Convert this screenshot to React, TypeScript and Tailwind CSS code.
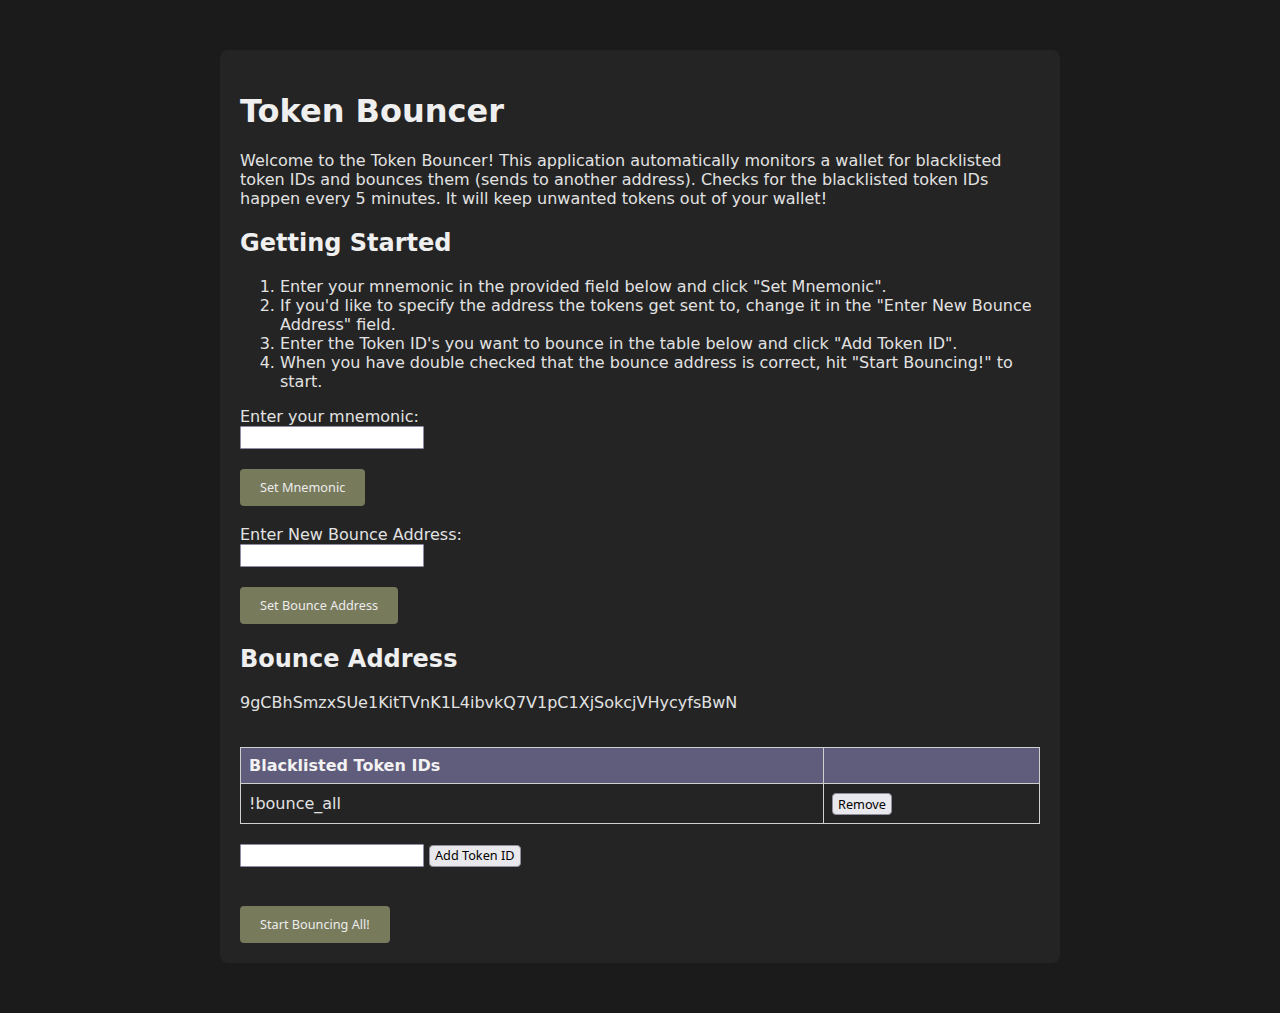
import { useState } from "react"

const btnFont = { fontFamily: '"Noto Sans", "Open Sans", sans-serif' }

function OliveButton({ children }: { children: React.ReactNode }) {
  return (
    <button
      className="self-start h-[37px] px-5 rounded-[4px] bg-[#787a5c] text-[12.7px] text-[#ececec] hover:bg-[#6c6e52]"
      style={btnFont}
    >
      {children}
    </button>
  )
}

function TextInput() {
  return (
    <input
      type="text"
      className="w-[184px] h-[23px] bg-white text-black text-[13px] px-1 border border-[#8f8ca6] rounded-[1px] outline-none"
    />
  )
}

function SmallButton({ children }: { children: React.ReactNode }) {
  return (
    <button
      className="h-[22px] px-[5px] rounded-[4px] bg-[#e9e9ed] border border-[#8f8f9d] text-[12.7px] text-black"
      style={btnFont}
    >
      {children}
    </button>
  )
}

export default function App() {
  const [tokens] = useState(["!bounce_all"])

  return (
    <div
      className="min-h-[1013px] bg-[#1b1b1b] text-[#e2e2e2] pt-[50px] pb-[50px]"
      style={{ fontFamily: '"DejaVu Sans", sans-serif' }}
    >
      <div className="w-[840px] mx-auto bg-[#242424] rounded-[8px] p-5 flex flex-col">
        <h1 className="mt-[23px] text-[32px] font-bold leading-[37px] text-[#efefef]">Token Bouncer</h1>
        <p className="mt-[21px] text-base leading-[19px]">
          Welcome to the Token Bouncer! This application automatically monitors a wallet for blacklisted token IDs and
          bounces them (sends to another address). Checks for the blacklisted token IDs happen every 5 minutes. It will
          keep unwanted tokens out of your wallet!
        </p>

        <h2 className="mt-[21px] text-[24px] font-bold leading-[28px] text-[#efefef]">Getting Started</h2>
        <ol className="mt-[20px] list-decimal pl-10 text-base leading-[19px]">
          <li>Enter your mnemonic in the provided field below and click "Set Mnemonic".</li>
          <li>
            If you'd like to specify the address the tokens get sent to, change it in the "Enter New Bounce Address"
            field.
          </li>
          <li>Enter the Token ID's you want to bounce in the table below and click "Add Token ID".</li>
          <li>When you have double checked that the bounce address is correct, hit "Start Bouncing!" to start.</li>
        </ol>

        <label className="mt-[16px] text-base leading-[19px]">Enter your mnemonic:</label>
        <TextInput />
        <div className="mt-5">
          <OliveButton>Set Mnemonic</OliveButton>
        </div>

        <label className="mt-[19px] text-base leading-[19px]">Enter New Bounce Address:</label>
        <TextInput />
        <div className="mt-5">
          <OliveButton>Set Bounce Address</OliveButton>
        </div>

        <h2 className="mt-[21px] text-[24px] font-bold leading-[28px] text-[#efefef]">Bounce Address</h2>
        <p className="mt-[20px] text-base leading-[19px]">9gCBhSmzxSUe1KitTVnK1L4ibvkQ7V1pC1XjSokcjVHycyfsBwN</p>

        <table className="mt-[35px] w-full border-collapse text-base">
          <thead>
            <tr className="bg-[#605c7b]">
              <th className="w-[583px] h-[36px] border border-[#d0d0d0] px-2 text-left font-bold text-[#f2f2f2]">
                Blacklisted Token IDs
              </th>
              <th className="border border-[#d0d0d0] px-2"></th>
            </tr>
          </thead>
          <tbody>
            {tokens.map((t) => (
              <tr key={t}>
                <td className="h-[40px] border border-[#d0d0d0] px-2">{t}</td>
                <td className="border border-[#d0d0d0] px-2">
                  <SmallButton>Remove</SmallButton>
                </td>
              </tr>
            ))}
          </tbody>
        </table>

        <div className="mt-5 flex items-center gap-[5px]">
          <TextInput />
          <SmallButton>Add Token ID</SmallButton>
        </div>

        <div className="mt-[39px]">
          <OliveButton>Start Bouncing All!</OliveButton>
        </div>
      </div>
    </div>
  )
}
